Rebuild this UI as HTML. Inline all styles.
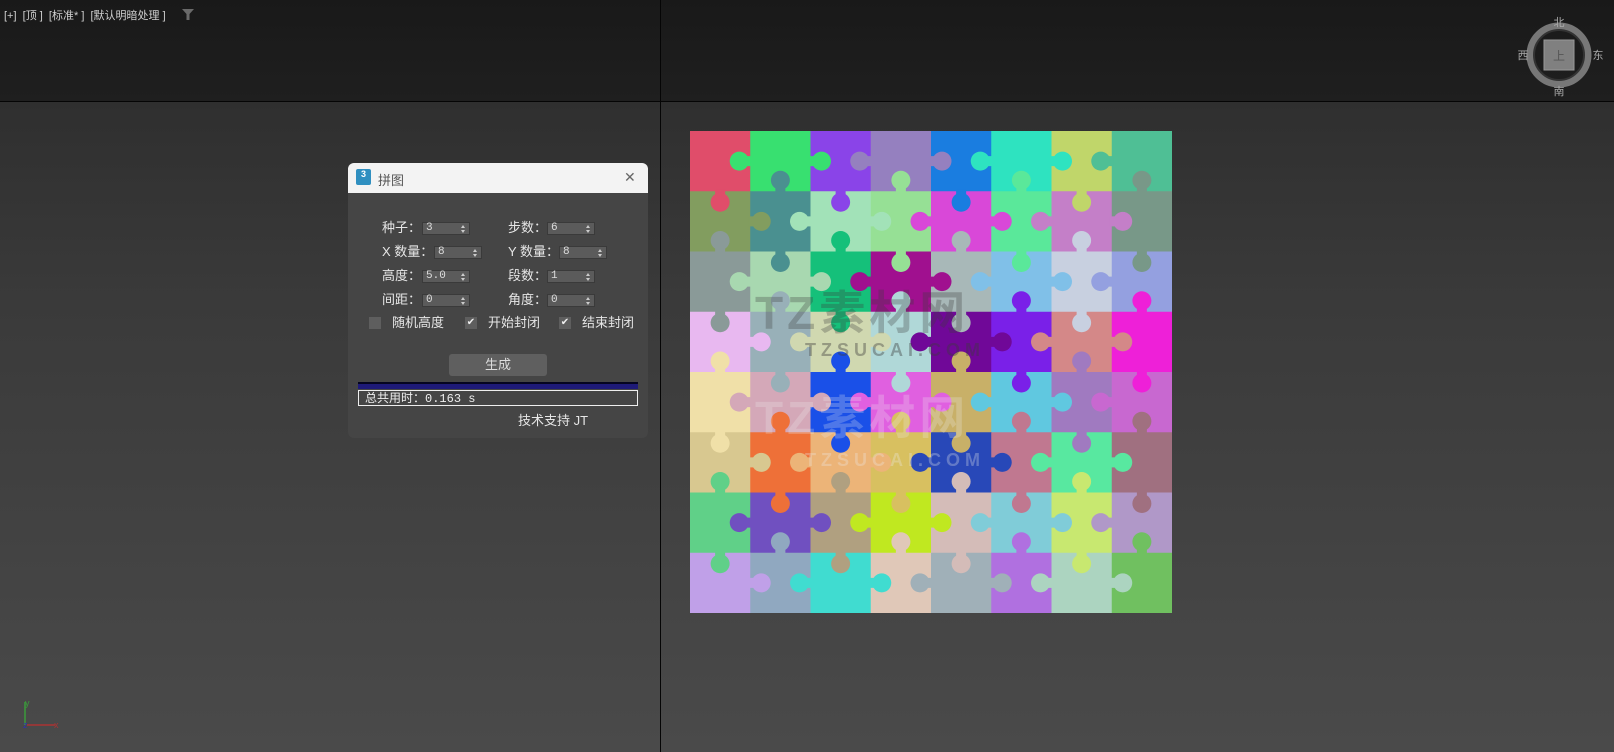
<!DOCTYPE html>
<html><head><meta charset="utf-8"><style>
*{margin:0;padding:0;box-sizing:border-box}
body{width:1614px;height:752px;overflow:hidden;position:relative;background:linear-gradient(#2f2f2f 102px,#3a3a3a 300px,#4a4a4a 752px);font-family:"Liberation Sans","Noto Sans CJK SC",sans-serif}
.top{position:absolute;left:0;top:0;width:1614px;height:101px;background:linear-gradient(#191919,#1f1f1f)}
.hl{position:absolute;left:0;top:101px;width:1614px;height:1px;background:#050505}
.vl{position:absolute;left:660px;top:0;width:1px;height:752px;background:#050505}
.abs{position:absolute}
.lbl{position:absolute;color:#e6e6e6;font-size:13px;line-height:14px}
.sp{position:absolute;width:48px;height:13px;background:#5b5b5b;border:1px solid #3a3a3a;color:#ddd;font-size:11px;line-height:11px;padding-left:3px;font-family:"Liberation Mono",monospace}
.sp:after{content:"";position:absolute;right:4px;top:2px;border:2.5px solid transparent;border-bottom:3px solid #ccc;border-top:0}
.sp:before{content:"";position:absolute;right:4px;top:7px;border:2.5px solid transparent;border-top:3px solid #ccc;border-bottom:0}
.cb{position:absolute;width:12px;height:12px;background:#5e5e5e;color:#eee;font-size:10px;line-height:12px;text-align:center}
</style></head><body>
<div class="top"></div>
<div class="abs" style="left:4px;top:7px;color:#cfcfcf;font-size:11px;white-space:nowrap">[+]&nbsp; [顶 ]&nbsp; [标准* ]&nbsp; [默认明暗处理 ]</div>
<svg class="abs" style="left:182px;top:9px" width="12" height="11"><path d="M0 0H12L7.5 5V11H4.5V5Z" fill="#6a6a6a"/></svg>
<svg class="abs" style="left:1515px;top:14px" width="90" height="84">
<circle cx="44" cy="41" r="29" fill="none" stroke="#777" stroke-width="7"/>
<circle cx="44" cy="41" r="25" fill="none" stroke="#333" stroke-width="2"/>
<rect x="29" y="26" width="30" height="30" fill="#808080" stroke="#999"/>
<text x="44" y="46" fill="#555" font-size="12" text-anchor="middle" font-family="Noto Sans CJK SC">上</text>
<text x="44" y="12" fill="#aaa" font-size="11" text-anchor="middle" font-family="Noto Sans CJK SC">北</text>
<text x="44" y="81" fill="#aaa" font-size="11" text-anchor="middle" font-family="Noto Sans CJK SC">南</text>
<text x="8" y="45" fill="#aaa" font-size="11" text-anchor="middle" font-family="Noto Sans CJK SC">西</text>
<text x="83" y="45" fill="#aaa" font-size="11" text-anchor="middle" font-family="Noto Sans CJK SC">东</text>
</svg>
<div class="hl"></div><div class="vl"></div>
<svg class="abs" style="left:18px;top:695px" width="45" height="40">
<path d="M7 30V7" stroke="#3a9a3a" stroke-width="1.5"/><text x="7" y="11" fill="#3a9a3a" font-size="9">y</text>
<path d="M9 30H37" stroke="#a33" stroke-width="1.5"/><text x="36" y="33" fill="#a33" font-size="9">x</text>
<text x="5" y="33" fill="#33a" font-size="9">z</text>
</svg>

<svg id="pz" class="abs" style="left:690px;top:131px" width="482" height="482"></svg>
<div class="abs" style="left:755px;top:277px;font-size:46px;font-weight:bold;color:rgba(60,60,60,.3);letter-spacing:4px">TZ素材网</div>
<div class="abs" style="left:805px;top:340px;font-size:18px;font-weight:bold;color:rgba(60,60,60,.4);letter-spacing:5px">TZSUCAI.COM</div>
<div class="abs" style="left:755px;top:382px;font-size:46px;font-weight:bold;color:rgba(235,235,235,.25);letter-spacing:4px">TZ素材网</div>
<div class="abs" style="left:805px;top:450px;font-size:18px;font-weight:bold;color:rgba(235,235,235,.3);letter-spacing:5px">TZSUCAI.COM</div>

<div class="abs" style="left:348px;top:163px;width:300px;height:275px;background:#454545;border-radius:6px;overflow:hidden">
 <div style="height:30px;background:#f3f3f3;position:relative">
  <div class="abs" style="left:8px;top:6px;width:15px;height:16px;background:#2f8fc0;border-radius:2px;color:#fff;font-size:9px;text-align:center;font-weight:bold;line-height:11px">3</div>
  <div class="abs" style="left:30px;top:7px;font-size:13px;color:#555">拼图</div>
  <div class="abs" style="left:276px;top:6px;font-size:14px;color:#666">✕</div>
 </div>
</div>
<div class="lbl" style="left:382px;top:221px">种子：</div><div class="sp" style="left:422px;top:222px">3</div>
<div class="lbl" style="left:508px;top:221px">步数：</div><div class="sp" style="left:547px;top:222px">6</div>
<div class="lbl" style="left:382px;top:245px">X 数量：</div><div class="sp" style="left:434px;top:246px">8</div>
<div class="lbl" style="left:508px;top:245px">Y 数量：</div><div class="sp" style="left:559px;top:246px">8</div>
<div class="lbl" style="left:382px;top:269px">高度：</div><div class="sp" style="left:422px;top:270px">5.0</div>
<div class="lbl" style="left:508px;top:269px">段数：</div><div class="sp" style="left:547px;top:270px">1</div>
<div class="lbl" style="left:382px;top:293px">间距：</div><div class="sp" style="left:422px;top:294px">0</div>
<div class="lbl" style="left:508px;top:293px">角度：</div><div class="sp" style="left:547px;top:294px">0</div>
<div class="cb" style="left:369px;top:317px"></div><div class="lbl" style="left:392px;top:316px">随机高度</div>
<div class="cb" style="left:465px;top:317px">✔</div><div class="lbl" style="left:488px;top:316px">开始封闭</div>
<div class="cb" style="left:559px;top:317px">✔</div><div class="lbl" style="left:582px;top:316px">结束封闭</div>
<div class="abs" style="left:449px;top:354px;width:98px;height:22px;background:#5f5f5f;border-radius:3px;color:#ddd;font-size:13px;text-align:center;line-height:22px">生成</div>
<div class="abs" style="left:358px;top:382px;width:280px;height:7px;background:#1e1a78;border-top:2px solid #050520"></div>
<div class="abs" style="left:358px;top:390px;width:280px;height:16px;border:1px solid #eee;color:#eee;font-size:12px;line-height:14px;padding-left:6px">总共用时：<span style="font-family:'Liberation Mono',monospace">0.163 s</span></div>
<div class="lbl" style="left:518px;top:414px">技术支持 JT</div>

<script>
var C=[["#e04d6a","#38e070","#8a44e8","#9580bf","#1a7de0","#2ee3c0","#c0d66a","#4fbf95"],
["#829d5f","#4a9090","#a2e2b8","#96e095","#d948d8","#5ae89a","#c47fc8","#789888"],
["#8a9a98","#a8d8b0","#15c07a","#a0108f","#a8b8b8","#80c0e8","#c8d0e0","#94a0e0"],
["#e8b8f0","#98b0b8","#d0d8b0","#b0d8d8","#700898","#7a20e8","#d48888","#ee20d8"],
["#f0e0a8","#d4a8b8","#1a50e8","#e060e0","#c8b068","#60c8e0","#a07ac0","#c868d0"],
["#d8c890","#ee7038","#ecb478","#d8c060","#2848b8","#c07890","#58e8a0","#a07080"],
["#60d088","#7050c0","#b0a080","#c0e820","#d4bcb8","#80ccd8","#c8e870","#b098c8"],
["#c0a0e8","#90a8c0","#40dcd0","#e0c8b8","#a0b0b8","#b070e0","#acd4c0","#70c060"]];
var s=482/8,h="";
for(var r=0;r<8;r++)for(var c=0;c<8;c++)h+='<rect x="'+(c*s)+'" y="'+(r*s)+'" width="'+(s+.5)+'" height="'+(s+.5)+'" fill="'+C[r][c]+'"/>';
for(var r=0;r<8;r++)for(var c=0;c<8;c++){
 if(c<7){var d=((r*3+c*5)%2)?1:-1;var col=d>0?C[r][c]:C[r][c+1];var x=(c+1)*s,y=(r+.5)*s;
  h+='<rect x="'+(x-(d>0?2:5))+'" y="'+(y-5)+'" width="7" height="10" fill="'+col+'"/><circle cx="'+(x+d*11)+'" cy="'+y+'" r="9.5" fill="'+col+'"/>';}
 if(r<7){var d=((r*7+c*3+1)%2)?1:-1;var col=d>0?C[r][c]:C[r+1][c];var x=(c+.5)*s,y=(r+1)*s;
  h+='<rect x="'+(x-5)+'" y="'+(y-(d>0?2:5))+'" width="10" height="7" fill="'+col+'"/><circle cx="'+x+'" cy="'+(y+d*11)+'" r="9.5" fill="'+col+'"/>';}
}
document.getElementById('pz').innerHTML=h;
</script>
</body></html>
